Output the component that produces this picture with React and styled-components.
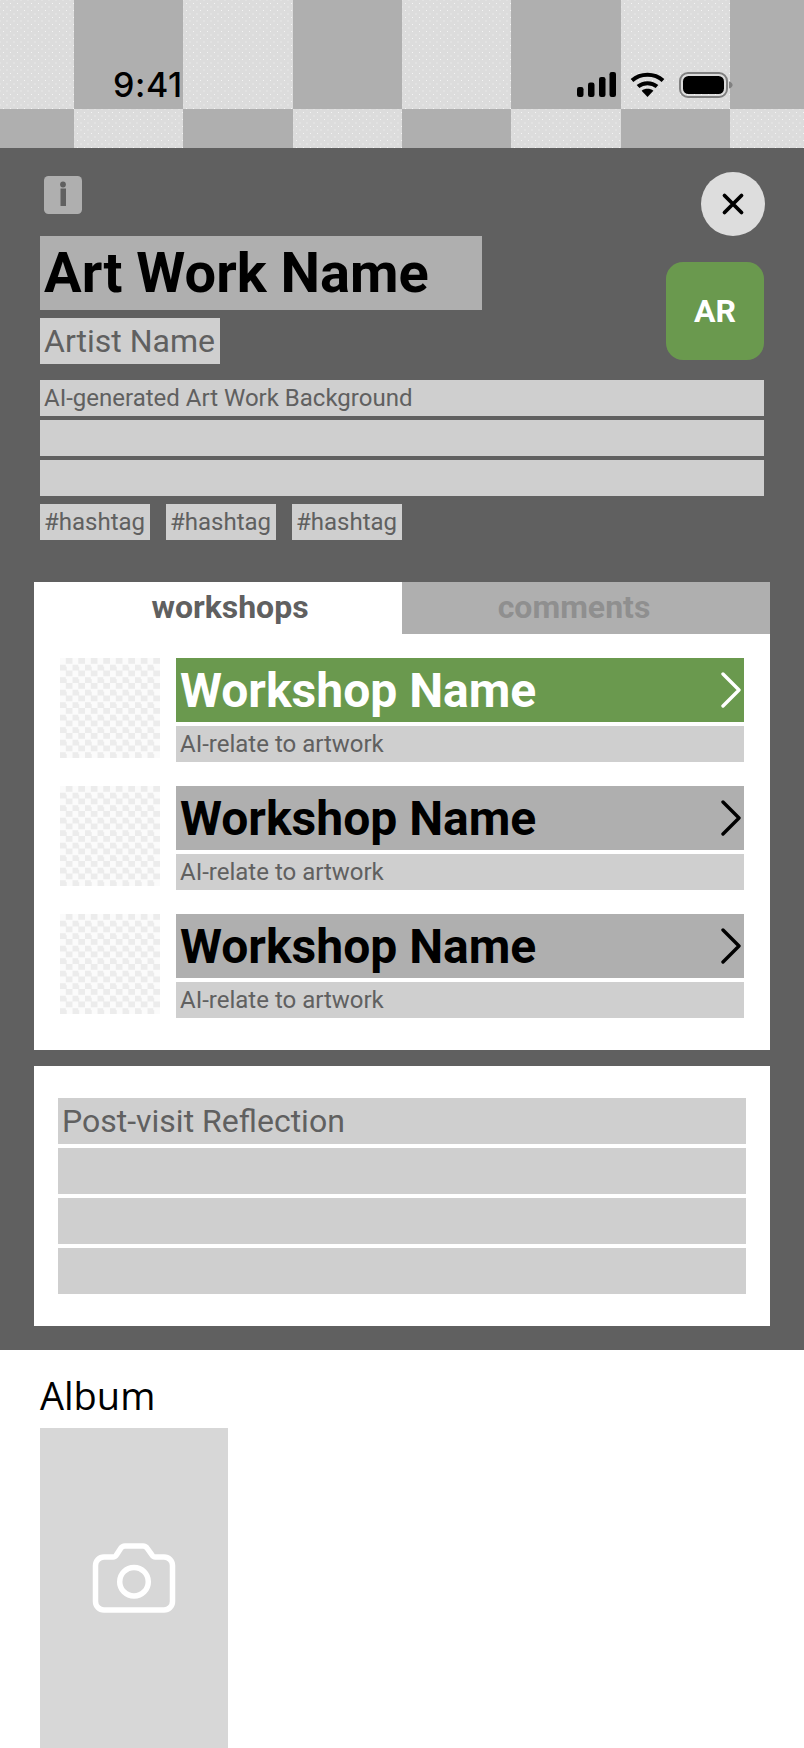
import React from "react";
import styled, { createGlobalStyle, css } from "styled-components";

const GlobalStyle = createGlobalStyle`
  html, body {
    margin: 0;
    padding: 0;
    background: #fff;
  }
  body {
    font-family: Roboto, "Liberation Sans", sans-serif;
  }
`;

const GREEN = "#6a994e";
const PANEL = "#606060";
const MID = "#afafaf";
const SOFT = "#cfcfcf";

const dots = css`
  background-color: #dcdcdc;
  background-image: radial-gradient(circle, #f4f4f4 0.7px, transparent 1px),
    radial-gradient(circle, #f4f4f4 0.7px, transparent 1px);
  background-size: 7px 7px;
  background-position: 0 0, 3.5px 3.5px;
`;

const Page = styled.div`
  position: relative;
  width: 804px;
  height: 1748px;
  overflow: hidden;
  background: #fff;
`;

const Backdrop = styled.div`
  display: grid;
  grid-template-columns: 74px repeat(6, 109.33px) 1fr;
  grid-template-rows: 109px 39px;
  height: 148px;
`;

const Cell = styled.div`
  ${(p) => (p.$light ? dots : `background: ${MID};`)}
`;

const StatusBar = styled.div`
  position: absolute;
  top: 0;
  left: 0;
  width: 804px;
  height: 109px;
  box-sizing: border-box;
  padding: 72px 71px 0 113px;
  display: flex;
  justify-content: space-between;
  align-items: flex-start;
`;

const Time = styled.span`
  font-family: Inter, "Liberation Sans", sans-serif;
  font-size: 34px;
  font-weight: 500;
  letter-spacing: 0.6px;
  line-height: 26px;
  color: #000;
`;

const StatusIcons = styled.div`
  display: flex;
  align-items: flex-start;
  gap: 14px;
`;

const Panel = styled.div`
  background: ${PANEL};
  padding: 24px 40px 24px;
`;

const TopRow = styled.div`
  display: flex;
  justify-content: space-between;
  align-items: flex-start;
  height: 64px;
`;

const InfoIcon = styled.svg`
  display: block;
  width: 38px;
  height: 38px;
  margin: 4px 0 0 4px;
`;

const CloseButton = styled.button`
  width: 64px;
  height: 64px;
  margin-right: -1px;
  padding: 0;
  border: 0;
  border-radius: 50%;
  display: flex;
  align-items: center;
  justify-content: center;
  background: #dddddd;
`;

const TitleRow = styled.div`
  display: flex;
  justify-content: space-between;
  align-items: flex-start;
  height: 144px;
`;

const TitleBlock = styled.div`
  display: flex;
  flex-direction: column;
  align-items: flex-start;
  gap: 8px;
`;

const Title = styled.h1`
  margin: 0;
  width: 442px;
  height: 74px;
  box-sizing: border-box;
  padding-left: 4px;
  background: ${MID};
  color: #000;
  font-size: 56px;
  font-weight: 700;
  line-height: 74px;
`;

const Artist = styled.div`
  width: 180px;
  height: 46px;
  box-sizing: border-box;
  padding-left: 4px;
  background: ${SOFT};
  color: ${PANEL};
  font-size: 32px;
  line-height: 46px;
`;

const Avatar = styled.div`
  width: 98px;
  height: 98px;
  margin-top: 26px;
  border-radius: 17px;
  background: ${GREEN};
  color: #fff;
  font-size: 32px;
  font-weight: 700;
  display: flex;
  align-items: center;
  justify-content: center;
`;

const Lines = styled.div`
  display: flex;
  flex-direction: column;
  gap: 4px;
`;

const DescLine = styled.div`
  height: 36px;
  padding-left: 4px;
  background: ${SOFT};
  color: ${PANEL};
  font-size: 24px;
  line-height: 36px;
`;

const Tags = styled.div`
  display: flex;
  gap: 16px;
  margin-top: 8px;
`;

const Tag = styled.span`
  height: 36px;
  width: 110px;
  box-sizing: border-box;
  padding-left: 4px;
  background: ${SOFT};
  color: ${PANEL};
  font-size: 24px;
  line-height: 36px;
`;

const WorkshopCard = styled.section`
  margin: 42px -6px 0;
  background: #fff;
`;

const Tabs = styled.div`
  display: grid;
  grid-template-columns: 1fr 1fr;
  height: 52px;
`;

const Tab = styled.div`
  box-sizing: border-box;
  padding: ${(p) => (p.$active ? "0 0 0 24px" : "0 24px 0 0")};
  background: ${(p) => (p.$active ? "#fff" : MID)};
  color: ${(p) => (p.$active ? PANEL : "#8f8f8f")};
  font-size: 32px;
  font-weight: 700;
  line-height: 50px;
  text-align: center;
`;

const WorkshopList = styled.div`
  display: flex;
  flex-direction: column;
  gap: 24px;
  padding: 24px 26px 32px;
`;

const WorkshopRow = styled.div`
  display: flex;
  gap: 16px;
`;

const Thumb = styled.div`
  width: 100px;
  height: 100px;
  flex: none;
  background-image: conic-gradient(#ececec 25%, #fbfbfb 0 50%, #ececec 0 75%, #fbfbfb 0);
  background-size: 12.5px 12.5px;
`;

const WorkshopInfo = styled.div`
  flex: 1;
  display: flex;
  flex-direction: column;
  gap: 4px;
`;

const WorkshopName = styled.div`
  height: 64px;
  padding: 0 3px 0 4px;
  display: flex;
  align-items: center;
  justify-content: space-between;
  background: ${(p) => (p.$active ? GREEN : MID)};
  color: ${(p) => (p.$active ? "#fff" : "#000")};
  font-size: 48px;
  font-weight: 700;
`;

const WorkshopNote = styled.div`
  height: 36px;
  padding-left: 4px;
  background: ${SOFT};
  color: ${PANEL};
  font-size: 24px;
  line-height: 36px;
`;

const ReflectionCard = styled.section`
  margin: 16px -6px 0;
  padding: 32px 24px;
  background: #fff;
  display: flex;
  flex-direction: column;
  gap: 4px;
`;

const ReflectionLine = styled.div`
  height: 46px;
  padding-left: 4px;
  background: ${SOFT};
  color: ${PANEL};
  font-size: 32px;
  line-height: 46px;
`;

const Album = styled.section`
  padding: 22px 40px 0;
`;

const AlbumTitle = styled.h2`
  margin: 0;
  height: 56px;
  font-family: "Open Sans", sans-serif;
  font-size: 38px;
  font-weight: 400;
  line-height: 46px;
  color: #000;
`;

const PhotoSlot = styled.div`
  width: 188px;
  height: 330px;
  box-sizing: border-box;
  padding-top: 115px;
  display: flex;
  justify-content: center;
  align-items: flex-start;
  background: #d7d7d7;
`;

const Chevron = ({ color }) => (
  <svg width="20" height="36" viewBox="0 0 20 36" fill="none">
    <path d="M2 2l16 16L2 34" stroke={color} strokeWidth="3.4" strokeLinecap="round" strokeLinejoin="round" />
  </svg>
);

const workshops = [true, false, false];
const backdropCells = [
  true, false, true, false, true, false, true, false,
  false, true, false, true, false, true, false, true,
];

export default function App() {
  return (
    <Page>
      <GlobalStyle />
      <Backdrop>
        {backdropCells.map((light, i) => (
          <Cell key={i} $light={light} />
        ))}
      </Backdrop>

      <StatusBar>
        <Time>9:41</Time>
        <StatusIcons>
          <svg width="39" height="25" viewBox="0 0 39 25" fill="#000">
            <rect x="0" y="15" width="6.5" height="10" rx="2.2" />
            <rect x="11" y="10.5" width="6.5" height="14.5" rx="2.2" />
            <rect x="22" y="5" width="6.5" height="20" rx="2.2" />
            <rect x="32.5" y="0" width="6.5" height="25" rx="2.2" />
          </svg>
          <svg width="35" height="25" viewBox="0 0 35 25" fill="none" stroke="#000">
            <path d="M2 8.6C10.6 0.9 24.4 0.9 33 8.6" strokeWidth="4" />
            <path d="M8 14.6C13.4 10 21.6 10 27 14.6" strokeWidth="4" />
            <path d="M17.5 25L11.6 18.8C15 16.2 20 16.2 23.4 18.8Z" fill="#000" stroke="none" />
          </svg>
          <svg width="54" height="26" viewBox="0 0 54 26" fill="none">
            <rect x="1" y="1" width="47" height="24" rx="8" stroke="#808080" strokeWidth="2" />
            <rect x="4" y="4" width="41" height="18" rx="5.5" fill="#000" />
            <path d="M50 9.5c2.4 0.6 3.6 2 3.6 3.5s-1.2 2.9-3.6 3.5z" fill="#808080" />
          </svg>
        </StatusIcons>
      </StatusBar>

      <Panel>
        <TopRow>
          <InfoIcon viewBox="0 0 38 38">
            <rect width="38" height="38" rx="4.5" fill={MID} />
            <circle cx="19" cy="8.5" r="2.9" fill={PANEL} />
            <rect x="16.5" y="12.5" width="5.5" height="17.5" fill={PANEL} />
          </InfoIcon>
          <CloseButton aria-label="close">
            <svg width="24" height="24" viewBox="0 0 24 24" fill="none">
              <path d="M3.5 3.5l17 17M20.5 3.5l-17 17" stroke="#000" strokeWidth="3.8" strokeLinecap="round" />
            </svg>
          </CloseButton>
        </TopRow>

        <TitleRow>
          <TitleBlock>
            <Title>Art Work Name</Title>
            <Artist>Artist Name</Artist>
          </TitleBlock>
          <Avatar>AR</Avatar>
        </TitleRow>

        <Lines>
          <DescLine>AI-generated Art Work Background</DescLine>
          <DescLine />
          <DescLine />
        </Lines>

        <Tags>
          <Tag>#hashtag</Tag>
          <Tag>#hashtag</Tag>
          <Tag>#hashtag</Tag>
        </Tags>

        <WorkshopCard>
          <Tabs>
            <Tab $active>workshops</Tab>
            <Tab>comments</Tab>
          </Tabs>
          <WorkshopList>
            {workshops.map((active, i) => (
              <WorkshopRow key={i}>
                <Thumb />
                <WorkshopInfo>
                  <WorkshopName $active={active}>
                    Workshop Name
                    <Chevron color={active ? "#fff" : "#000"} />
                  </WorkshopName>
                  <WorkshopNote>AI-relate to artwork</WorkshopNote>
                </WorkshopInfo>
              </WorkshopRow>
            ))}
          </WorkshopList>
        </WorkshopCard>

        <ReflectionCard>
          <ReflectionLine>Post-visit Reflection</ReflectionLine>
          <ReflectionLine />
          <ReflectionLine />
          <ReflectionLine />
        </ReflectionCard>
      </Panel>

      <Album>
        <AlbumTitle>Album</AlbumTitle>
        <PhotoSlot>
          <svg width="84" height="70" viewBox="0 0 84 70" fill="none" stroke="#fff" strokeWidth="5.5">
            <path d="M33 3h18a5 5 0 0 1 4.2 2.3L60 12a4 4 0 0 0 3.4 2H72a8.5 8.5 0 0 1 8.5 8.5V58.5a8.5 8.5 0 0 1-8.5 8.5H12a8.5 8.5 0 0 1-8.5-8.5V22.5A8.5 8.5 0 0 1 12 14h9a4 4 0 0 0 3.4-2l4.4-6.7A5 5 0 0 1 33 3z" />
            <circle cx="42" cy="38.7" r="14.3" />
          </svg>
        </PhotoSlot>
      </Album>
    </Page>
  );
}
